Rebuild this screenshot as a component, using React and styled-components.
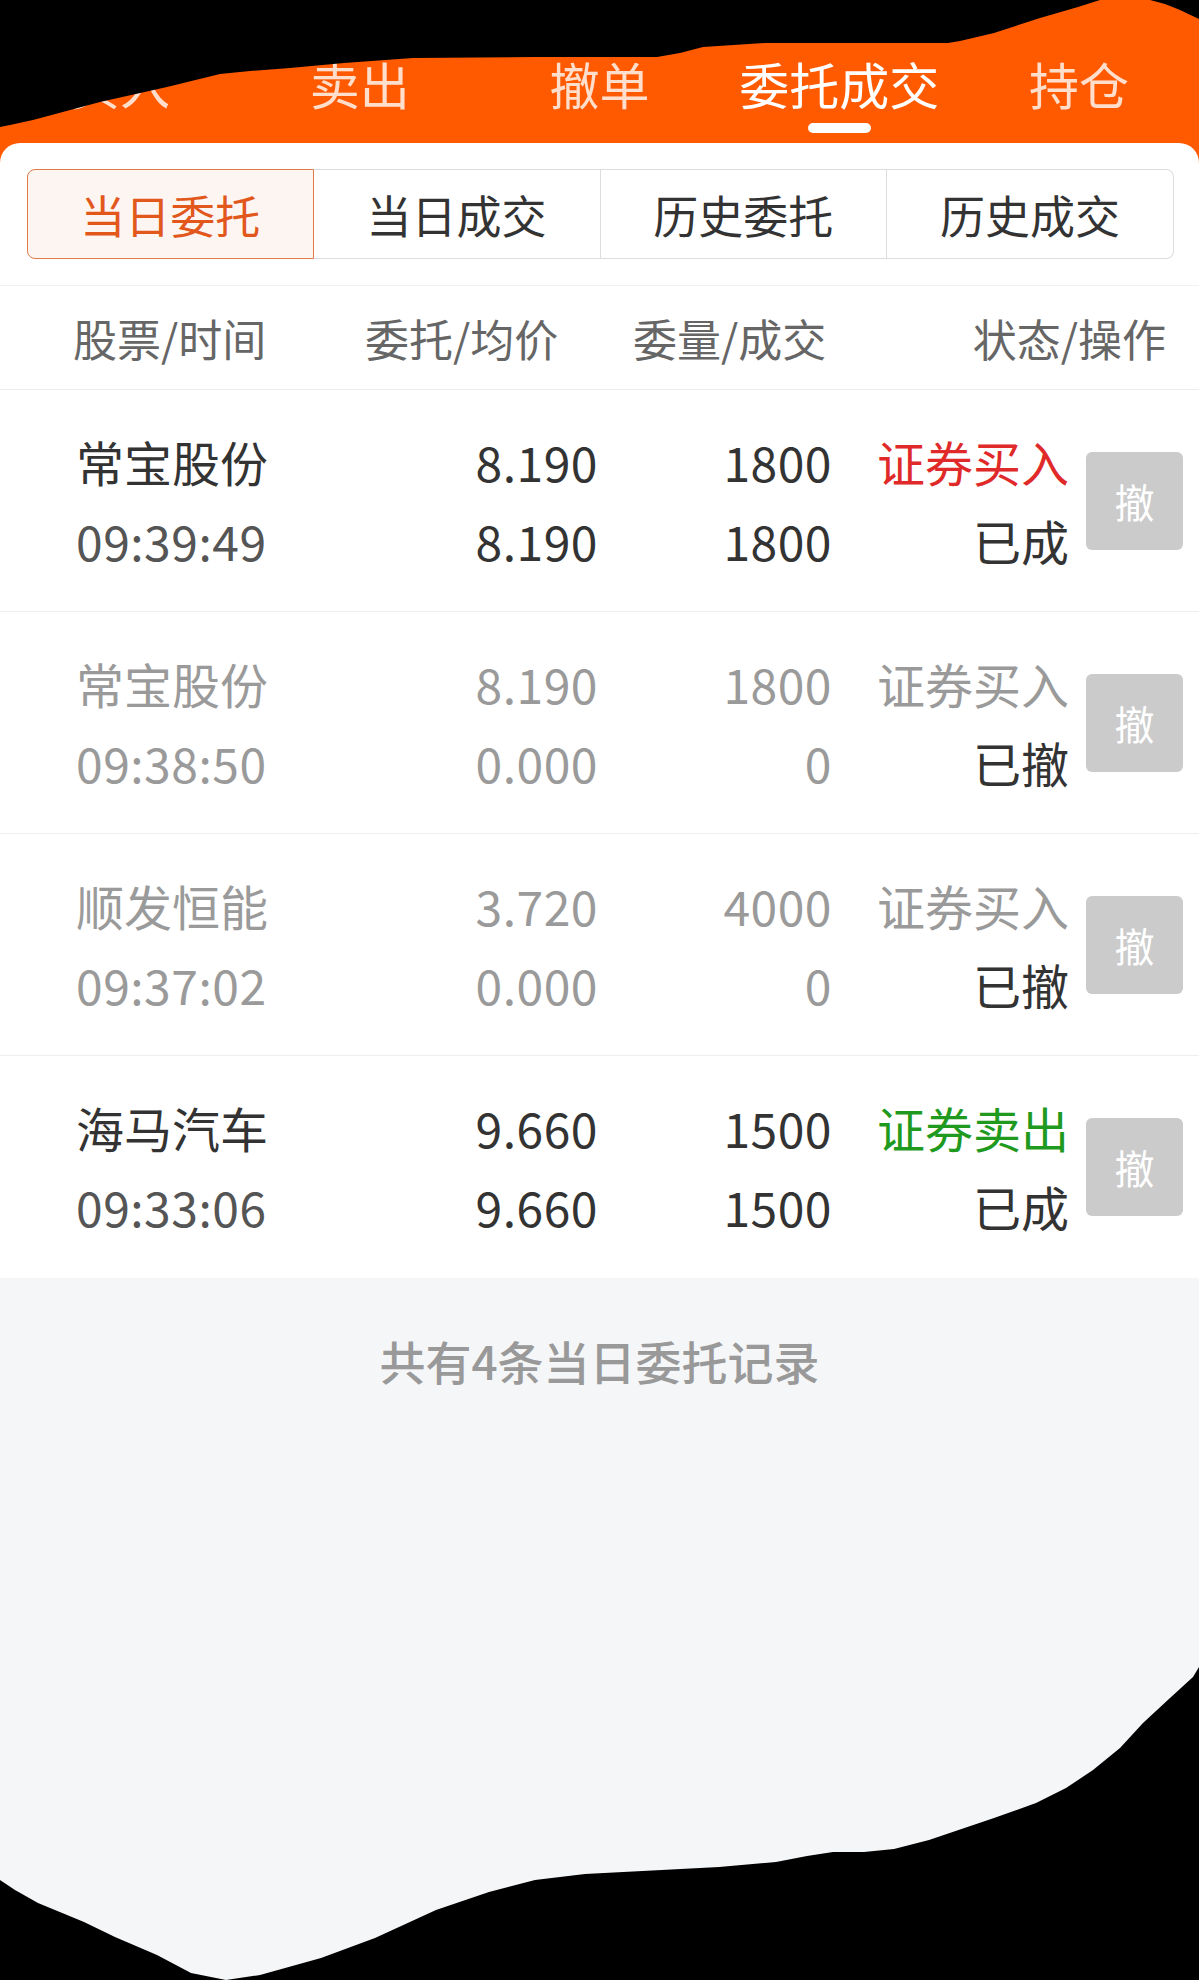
import React from 'react'
import styled, { createGlobalStyle } from 'styled-components'

const GlobalStyle = createGlobalStyle`
  html, body {
    margin: 0;
    padding: 0;
    background: #000;
  }
  * {
    box-sizing: border-box;
  }
`

const FONT = `"Noto Sans CJK SC", "Noto Sans", Roboto, sans-serif`

const Page = styled.div`
  position: relative;
  width: 1199px;
  height: 1980px;
  overflow: hidden;
  background: #f5f6f8;
  font-family: ${FONT};
`

const TopBar = styled.div`
  display: grid;
  grid-template-columns: repeat(5, 1fr);
  height: 163px;
  background: #ff5a00;
`

const TopTab = styled.div`
  display: flex;
  flex-direction: column;
  align-items: center;
  padding-top: 53px;
  font-size: 50px;
  line-height: 60px;
  color: ${(p) => (p.active ? '#ffffff' : 'rgba(255,255,255,0.8)')};

  &::after {
    content: '';
    display: block;
    width: 63px;
    height: 10px;
    margin-top: 10px;
    border-radius: 5px;
    background: ${(p) => (p.active ? '#ffffff' : 'transparent')};
  }
`

const Panel = styled.div`
  position: relative;
  margin-top: -20px;
  background: #ffffff;
  border-radius: 20px 20px 0 0;
`

const Segments = styled.div`
  display: grid;
  grid-template-columns: repeat(4, 1fr);
  margin: 0 25px 0 27px;
  padding-top: 26px;
  padding-bottom: 26px;
`

const Segment = styled.div`
  height: 90px;
  display: flex;
  align-items: center;
  justify-content: center;
  font-size: 45px;
  color: ${(p) => (p.active ? '#e2571c' : '#333333')};
  background: ${(p) => (p.active ? '#fdf5f1' : '#ffffff')};
  border: 1.5px solid ${(p) => (p.active ? '#e27a45' : '#dddddd')};
  border-left-width: ${(p) => (p.first ? '1.5px' : '0')};
  border-radius: ${(p) => (p.first ? '8px 0 0 8px' : p.last ? '0 8px 8px 0' : '0')};
`

const HeadRow = styled.div`
  display: grid;
  grid-template-columns: 292px 268px 334px 1fr;
  align-items: center;
  height: 105px;
  padding: 0 33px 0 73px;
  border-top: 1.5px solid #f2f2f2;
  border-bottom: 1.5px solid #ececec;
  font-size: 44px;
  color: #666666;
`

const HeadCell = styled.div`
  text-align: ${(p) => (p.right ? 'right' : 'left')};
  white-space: nowrap;
`

const Row = styled.div`
  display: grid;
  grid-template-columns: 224px 298px 234px 237px 97px;
  align-items: center;
  height: 222px;
  padding: 0 16px 0 76px;
  border-bottom: ${(p) => (p.last ? 'none' : '1.5px solid #eeeeee')};

  & > button {
    margin-left: 17px;
  }
`

const Cell = styled.div`
  display: flex;
  flex-direction: column;
  align-items: ${(p) => (p.left ? 'flex-start' : 'flex-end')};
  font-size: 48px;
  line-height: 79px;
  white-space: nowrap;
`

const Line = styled.span`
  color: ${(p) => p.color || '#333333'};
  letter-spacing: ${(p) => (p.num ? '0.5px' : '0')};
`

const CancelButton = styled.button`
  width: 97px;
  height: 98px;
  padding: 0;
  border: none;
  border-radius: 6px;
  background: #cbcbcb;
  color: #ffffff;
  font-family: ${FONT};
  font-size: 40px;
`

const Footer = styled.div`
  padding-top: 60px;
  text-align: center;
  font-size: 46px;
  font-weight: 500;
  line-height: 44px;
  color: #999999;
`

const Mask = styled.svg`
  position: absolute;
  top: 0;
  left: 0;
  pointer-events: none;
`

const tabs = ['买入', '卖出', '撤单', '委托成交', '持仓']
const segments = ['当日委托', '当日成交', '历史委托', '历史成交']

const RED = '#e02a2a'
const GREEN = '#1f9a1f'
const MUTED = '#9a9a9a'

const orders = [
  { name: '常宝股份', time: '09:39:49', price: '8.190', avg: '8.190', qty: '1800', done: '1800', side: '证券买入', sideColor: RED, state: '已成' },
  { name: '常宝股份', time: '09:38:50', price: '8.190', avg: '0.000', qty: '1800', done: '0', side: '证券买入', state: '已撤', muted: true },
  { name: '顺发恒能', time: '09:37:02', price: '3.720', avg: '0.000', qty: '4000', done: '0', side: '证券买入', state: '已撤', muted: true },
  { name: '海马汽车', time: '09:33:06', price: '9.660', avg: '9.660', qty: '1500', done: '1500', side: '证券卖出', sideColor: GREEN, state: '已成' },
]

const topMask = 'M0,0 L1100,0 L1078,7 L1040,18 L994,33 L960,41 L948,43 L765,43 L703,47 L680,53 L657,57 L535,57 L413,58 L344,63 L290,68 L250,71 L220,74 L167,87 L100,102 L33,120 L10,125 L0,127 Z'
const topRightMask = 'M1150,0 L1199,0 L1199,19 L1180,10 L1165,4 Z'
const bottomMask = 'M0,1880 L15,1890 L38,1903 L84,1922 L115,1937 L157,1955 L191,1973 L226,1980 L260,1975 L321,1958 L375,1938 L436,1910 L489,1892 L535,1880 L585,1874 L719,1867 L776,1862 L807,1856 L833,1852 L864,1852 L894,1849 L929,1840 L994,1818 L1036,1803 L1066,1788 L1093,1770 L1120,1748 L1143,1723 L1170,1698 L1193,1677 L1199,1667 L1199,1980 L0,1980 Z'

function OrderRow({ o, last }) {
  const main = o.muted ? MUTED : '#333333'
  const sub = o.muted ? MUTED : '#555555'
  return (
    <Row last={last}>
      <Cell left>
        <Line color={main}>{o.name}</Line>
        <Line num color={sub}>{o.time}</Line>
      </Cell>
      <Cell>
        <Line num color={main}>{o.price}</Line>
        <Line num color={main}>{o.avg}</Line>
      </Cell>
      <Cell>
        <Line num color={main}>{o.qty}</Line>
        <Line num color={main}>{o.done}</Line>
      </Cell>
      <Cell>
        <Line color={o.muted ? MUTED : o.sideColor}>{o.side}</Line>
        <Line color="#333333">{o.state}</Line>
      </Cell>
      <CancelButton>撤</CancelButton>
    </Row>
  )
}

export default function App() {
  return (
    <Page>
      <GlobalStyle />
      <TopBar>
        {tabs.map((t) => (
          <TopTab key={t} active={t === '委托成交'}>{t}</TopTab>
        ))}
      </TopBar>
      <Panel>
        <Segments>
          {segments.map((s, i) => (
            <Segment key={s} active={i === 0} first={i === 0} last={i === segments.length - 1}>
              {s}
            </Segment>
          ))}
        </Segments>
        <HeadRow>
          <HeadCell>股票/时间</HeadCell>
          <HeadCell>委托/均价</HeadCell>
          <HeadCell>委量/成交</HeadCell>
          <HeadCell right>状态/操作</HeadCell>
        </HeadRow>
        {orders.map((o, i) => (
          <OrderRow key={o.time} o={o} last={i === orders.length - 1} />
        ))}
      </Panel>
      <Footer>共有4条当日委托记录</Footer>
      <Mask width="1199" height="1980" viewBox="0 0 1199 1980">
        <path d={topMask} fill="#000" />
        <path d={topRightMask} fill="#000" />
        <path d={bottomMask} fill="#000" />
      </Mask>
    </Page>
  )
}
